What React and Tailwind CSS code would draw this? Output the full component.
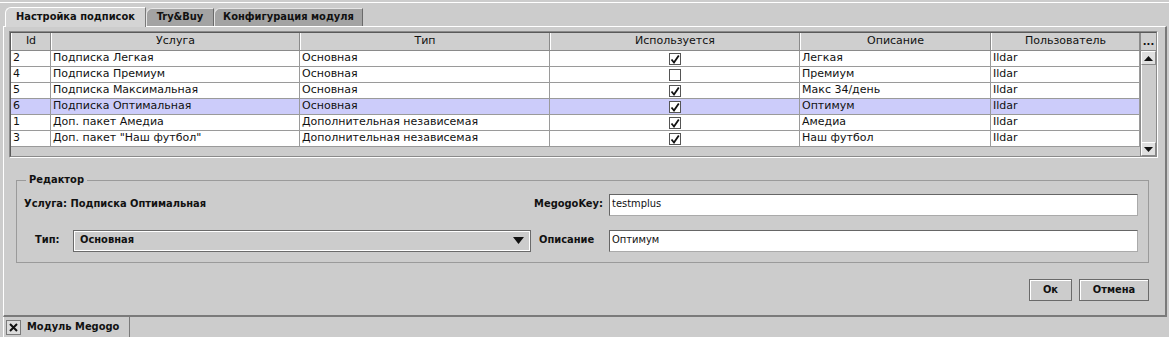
const rows = [
  { id: '2', name: 'Подписка Легкая', type: 'Основная', used: true, desc: 'Легкая', user: 'Ildar' },
  { id: '4', name: 'Подписка Премиум', type: 'Основная', used: false, desc: 'Премиум', user: 'Ildar' },
  { id: '5', name: 'Подписка Максимальная', type: 'Основная', used: true, desc: 'Макс 34/день', user: 'Ildar' },
  { id: '6', name: 'Подписка Оптимальная', type: 'Основная', used: true, desc: 'Оптимум', user: 'Ildar', selected: true },
  { id: '1', name: 'Доп. пакет Амедиа', type: 'Дополнительная независемая', used: true, desc: 'Амедиа', user: 'Ildar' },
  { id: '3', name: 'Доп. пакет "Наш футбол"', type: 'Дополнительная независемая', used: true, desc: 'Наш футбол', user: 'Ildar' },
];

const headers = ['Id', 'Услуга', 'Тип', 'Используется', 'Описание', 'Пользователь'];
const cols = 'grid grid-cols-[40px_249px_250px_250px_191px_149px]';

function Check({ on }) {
  return (
    <span className="w-[12px] h-[12px] border border-[#555] bg-white flex items-center justify-center">
      {on && (
        <svg width="10" height="10" viewBox="0 0 10 10">
          <path d="M1.5 5.5 L4 8.5 L8.8 1.5" stroke="#111" strokeWidth="1.8" fill="none" />
        </svg>
      )}
    </span>
  );
}

function Arrow({ down }) {
  return (
    <svg width="9" height="5" viewBox="0 0 9 5">
      <path d={down ? 'M0 0 L9 0 L4.5 5 Z' : 'M0 5 L9 5 L4.5 0 Z'} fill="#111" />
    </svg>
  );
}

export default function App() {
  return (
    <div
      className="w-[1169px] h-[337px] bg-[#cccccc] flex flex-col overflow-hidden text-[#111]"
      style={{ fontFamily: '"DejaVu Sans", sans-serif' }}
    >
      <div className="h-[2px]" />
      <div className="h-[5px] border-t border-white" />

      {/* tabs */}
      <div className="h-[19px] flex items-end pl-[5px] text-[11px] font-bold font-stretch-condensed">
        <div className="h-[20px] w-[141px] bg-[#d4d4d4] border-t border-l border-white border-r border-r-[#7a7a7a] rounded-tl-[6px] flex items-center justify-center relative top-[1px] z-10">
          Настройка подписок
        </div>
        <div className="h-[18px] w-[68px] bg-[#a3a3a3] border-t border-l border-[#e6e6e6] border-r border-r-[#6a6a6a] rounded-tl-[6px] flex items-center justify-center">
          Try&amp;Buy
        </div>
        <div className="h-[18px] w-[149px] bg-[#a3a3a3] border-t border-l border-[#e6e6e6] border-r border-r-[#6a6a6a] rounded-tl-[6px] flex items-center justify-center">
          Конфигурация модуля
        </div>
      </div>

      {/* panel */}
      <div className="h-[291px] ml-[3px] mr-[2px] border-t border-l border-white border-r-2 border-b-2 border-r-[#7a7a7a] border-b-[#7a7a7a] flex flex-col pt-[4px] pl-[5px]">
        {/* table */}
        <div className="w-[1149px] h-[127px] border border-[#8a8a8a] border-r-white border-b-white">
          <div className="flex h-full border border-[#5a5a5a] border-r-[#8a8a8a] border-b-[#8a8a8a]">
            <div className="flex flex-col">
              <div className={cols + ' h-[18px] text-[11px] bg-[#cfcfcf] border-b border-[#8a8a8a]'}>
                {headers.map((h) => (
                  <div key={h} className="border-r border-[#8a8a8a] border-l border-l-white flex items-center justify-center">
                    {h}
                  </div>
                ))}
              </div>
              {rows.map((r) => (
                <div
                  key={r.id}
                  className={cols + ' h-[16px] text-[11px] ' + (r.selected ? 'bg-[#ccccfa]' : 'bg-white')}
                >
                  {[r.id, r.name, r.type].map((v, i) => (
                    <div key={i} className="border-r border-b border-[#9a9a9a] pl-[2px] flex items-center whitespace-nowrap overflow-hidden">
                      {v}
                    </div>
                  ))}
                  <div className="border-r border-b border-[#9a9a9a] flex items-center justify-center">
                    <Check on={r.used} />
                  </div>
                  {[r.desc, r.user].map((v, i) => (
                    <div key={i} className="border-r border-b border-[#9a9a9a] pl-[2px] flex items-center whitespace-nowrap overflow-hidden">
                      {v}
                    </div>
                  ))}
                </div>
              ))}
            </div>
            {/* scrollbar */}
            <div className="w-[16px] flex flex-col border-l border-[#8a8a8a]">
              <div className="h-[18px] bg-[#cfcfcf] border-b border-[#8a8a8a] flex items-end justify-center pb-[3px] text-[10px] font-bold leading-none">
                ...
              </div>
              <div className="h-[14px] bg-[#e0e0e0] border border-[#8a8a8a] border-t-white border-l-white flex items-center justify-center">
                <Arrow />
              </div>
              <div className="flex-1 bg-[#cccccc] border-l border-white" />
              <div className="h-[14px] bg-[#e0e0e0] border border-[#8a8a8a] border-t-white border-l-white flex items-center justify-center">
                <Arrow down />
              </div>
            </div>
          </div>
        </div>

        {/* editor */}
        <fieldset className="ml-[7px] mt-[14px] w-[1133px] h-[91px] border border-[#9a9a9a] px-[6px] text-[11px]">
          <legend className="px-[3px] ml-[3px] font-bold font-stretch-condensed">Редактор</legend>
          <div className="grid grid-cols-[50px_458px_78px_529px] grid-rows-[22px_22px] gap-y-[14px] mt-[5px] items-center font-bold font-stretch-condensed">
            <div className="col-span-2 pl-[1px]">Услуга: Подписка Оптимальная</div>
            <div className="text-right pr-[6px]">MegogoKey:</div>
            <div className="h-[22px] bg-white border border-[#666] border-r-[#aaa] border-b-[#aaa] flex items-center pl-[2px] font-normal">
              testmplus
            </div>
            <div className="pl-[12px]">Тип:</div>
            <div className="h-[22px] border border-[#6a6a6a] shadow-[inset_-1px_-1px_0_#ffffff,inset_1px_1px_0_#ffffff] flex items-center justify-between pl-[6px] pr-[6px]">
              <span>Основная</span>
              <svg width="11" height="7" viewBox="0 0 11 7">
                <path d="M0 0 L11 0 L5.5 7 Z" fill="#111" />
              </svg>
            </div>
            <div className="pl-[8px]">Описание</div>
            <div className="h-[22px] bg-white border border-[#666] border-r-[#aaa] border-b-[#aaa] flex items-center pl-[2px] font-normal">
              Оптимум
            </div>
          </div>
        </fieldset>

        {/* buttons */}
        <div className="flex justify-end gap-[7px] mt-[16px] pr-[16px] text-[11px] font-bold font-stretch-condensed">
          <button className="w-[43px] h-[22px] border border-[#6a6a6a] shadow-[inset_1px_1px_0_#ffffff] bg-[#cccccc]">Ок</button>
          <button className="w-[70px] h-[22px] border border-[#6a6a6a] shadow-[inset_1px_1px_0_#ffffff] bg-[#cccccc]">Отмена</button>
        </div>
      </div>

      {/* bottom tab */}
      <div className="flex-1 flex">
        <div className="ml-[3px] w-[127px] h-full border-r border-[#7a7a7a] border-l border-l-white flex items-center gap-[6px] pl-[2px] text-[11px] font-bold font-stretch-condensed">
          <span className="w-[15px] h-[15px] border border-[#7a7a7a] bg-[#dcdcdc] flex items-center justify-center">
            <svg width="9" height="9" viewBox="0 0 9 9">
              <path d="M1 1 L8 8 M8 1 L1 8" stroke="#111" strokeWidth="2" />
            </svg>
          </span>
          Модуль Megogo
        </div>
      </div>
    </div>
  );
}
